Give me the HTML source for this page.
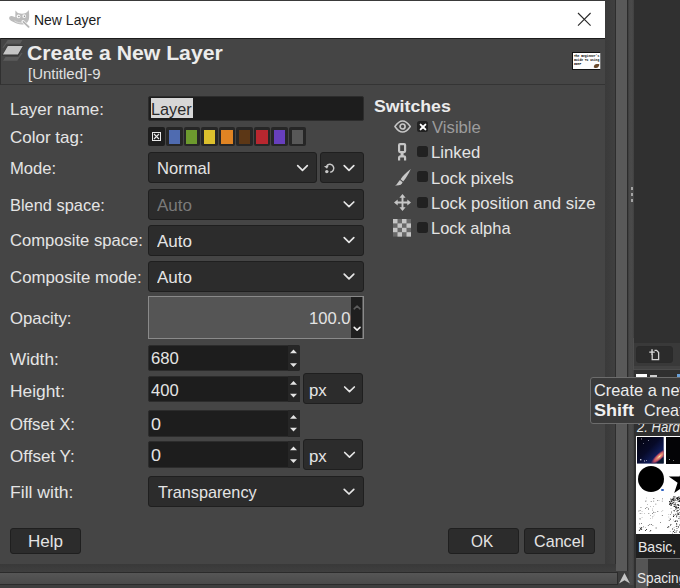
<!DOCTYPE html>
<html><head><meta charset="utf-8"><title>New Layer</title>
<style>
*{box-sizing:border-box;margin:0;padding:0}
html,body{width:680px;height:588px;overflow:hidden;background:#3c3c3c}
body{position:relative;font-family:"Liberation Sans",sans-serif;color:#e6e6e6;font-size:17px}
.a{position:absolute}
.t{position:absolute;white-space:pre;line-height:1;transform-origin:0 0}
.entry{position:absolute;background:#1d1d1d;border:1px solid #2c2c2c;border-radius:2px}
.spin{position:absolute;background:#262626;width:12px}
.combo,.btn{position:absolute;background:#2c2c2c;border:1px solid #1f1f1f;border-radius:3px}
.chk{position:absolute;width:11px;height:11px;background:#212121;border-radius:2.5px;left:417px}
.tag{position:absolute;top:127.3px;width:16.6px;height:19px;background:#262626;border-radius:2px}
.tag i{position:absolute;left:2.7px;top:2.5px;width:11.3px;height:14px;display:block}
svg{position:absolute;overflow:visible}
</style></head><body>

<!-- ===== main window behind ===== -->
<div class="a" style="left:0;top:0;width:680px;height:588px;background:#3c3c3c"></div>
<!-- shadow strip right of dialog -->
<div class="a" style="left:605px;top:0;width:11px;height:572px;background:linear-gradient(90deg,#3a3a3a,#404040)"></div>
<!-- vertical scrollbar -->
<div class="a" style="left:615px;top:0;width:13px;height:571px;background:#595959;border-left:1px solid #2e2e2e;border-right:1px solid #2b2b2b"></div>
<!-- paned handle -->
<div class="a" style="left:628px;top:0;width:6px;height:588px;background:linear-gradient(90deg,#3a3a3a 0,#484848 1.2px,#4a4a4a 4px,#404040 6px)"></div>
<div class="a" style="left:631px;top:187px;width:2px;height:3px;background:#a4a4a4"></div>
<div class="a" style="left:631px;top:193px;width:2px;height:3px;background:#a4a4a4"></div>
<div class="a" style="left:631px;top:199px;width:2px;height:3px;background:#a4a4a4"></div>
<!-- right dock -->
<div class="a" style="left:633.7px;top:0;width:46.3px;height:588px;background:#303030"></div>
<div class="a" style="left:634px;top:343px;width:46px;height:23px;background:#393939"></div>
<div class="a" style="left:634px;top:366px;width:46px;height:4px;background:#424242;border-bottom:1px solid #4c4c4c"></div>
<div class="a" style="left:633px;top:338px;width:1.2px;height:32px;background:#4e4e4e"></div>
<div class="btn" style="left:636.2px;top:345.5px;width:37px;height:17.6px;border-color:#2a2a2a;background:#2b2b2b"></div>
<svg style="left:648.8px;top:348.8px" width="11" height="12" viewBox="0 0 12 13"><path d="M3.500 5.500V11.500H10.500V3.800L8.300 1.500H6" fill="none" stroke="#d4d4d4" stroke-width="1.400"/><path d="M3.300 .3V6.300M.3 3.300H6.300" stroke="#dcdcdc" stroke-width="1.500"/></svg>
<!-- tabs peeking -->
<div class="a" style="left:636px;top:374px;width:11px;height:4px;background:#fff"></div>
<div class="a" style="left:650px;top:375px;width:7px;height:2px;background:#cfcfcf"></div>
<div class="a" style="left:677px;top:374px;width:3px;height:3px;background:#6aa0d8"></div>
<!-- brush grid -->
<div class="a" style="left:636px;top:436px;width:44px;height:98px;background:#fff"></div>
<svg style="left:637.4px;top:437.2px" width="26.7" height="26.6" viewBox="0 0 26.7 26.6">
<defs><linearGradient id="gx" x1="0" y1="0" x2="1" y2="1"><stop offset="0" stop-color="#04040e"/><stop offset=".45" stop-color="#070a28"/><stop offset=".7" stop-color="#101c58"/><stop offset="1" stop-color="#0a1030"/></linearGradient>
<radialGradient id="gp"><stop offset="0" stop-color="#f8e8b0"/><stop offset=".25" stop-color="#e89070"/><stop offset=".6" stop-color="#b84a62"/><stop offset="1" stop-color="#5a2a70" stop-opacity="0"/></radialGradient>
<clipPath id="gc"><rect width="26.7" height="26.6"/></clipPath></defs>
<rect width="26.7" height="26.6" fill="url(#gx)"/>
<g clip-path="url(#gc)"><ellipse cx="22.5" cy="19.5" rx="12" ry="3.6" fill="url(#gp)" transform="rotate(-42 22.5 19.5)"/>
<path d="M20 26.6L26.7 20V26.6z" fill="#0a1a30"/></g>
<g fill="#c8c8d8"><rect x="3" y="22" width="1.4" height="1.4"/><rect x="7" y="23.5" width="1" height="1"/><rect x="4" y="1.5" width=".9" height=".9"/><rect x="11" y="3" width=".8" height=".8"/><rect x="9" y="23" width=".8" height=".8"/><rect x="6" y="6" width=".7" height=".7"/></g>
</svg>
<div class="a" style="left:666px;top:437.2px;width:14px;height:26.6px;background:#040406"></div>
<div class="a" style="left:669px;top:459px;width:1.2px;height:1.2px;background:#999"></div>
<div class="a" style="left:673px;top:460px;width:1px;height:1px;background:#777"></div>
<div class="a" style="left:637.8px;top:465.9px;width:26.2px;height:26.2px;border-radius:50%;background:#000"></div>
<div class="a" style="left:660.5px;top:489px;width:3px;height:2.2px;background:#2a5fc0;border-radius:1px"></div>
<svg style="left:666px;top:465.5px" width="14" height="30" viewBox="0 0 14 30"><polygon points="17,0 13.6,10.4 2.7,10.4 11.6,16.8 8.2,27.1 17,20.7" fill="#000"/></svg>
<svg style="left:636px;top:494px" width="44" height="40" viewBox="0 0 44 40">
<path d="M10.1 6.8h0.5v0.5h-0.5zM3.8 19.1h0.7v0.7h-0.7zM16.6 31.1h0.6v0.6h-0.6zM2.9 15.9h0.5v0.5h-0.5zM8.0 19.6h0.5v0.5h-0.5zM22.7 6.0h0.6v0.6h-0.6zM17.8 20.7h0.5v0.5h-0.5zM16.4 14.7h0.6v0.6h-0.6zM3.2 29.5h0.7v0.7h-0.7zM12.5 19.3h0.7v0.7h-0.7zM16.0 23.8h0.5v0.5h-0.5zM16.5 22.4h0.7v0.7h-0.7zM4.4 24.8h0.5v0.5h-0.5zM17.5 17.9h0.8v0.8h-0.8zM21.4 16.9h0.8v0.8h-0.8zM11.0 9.9h0.6v0.6h-0.6zM19.5 9.8h0.7v0.7h-0.7zM15.1 30.0h0.8v0.8h-0.8zM9.2 33.4h0.5v0.5h-0.5zM14.8 7.3h0.7v0.7h-0.7zM5.8 17.6h0.5v0.5h-0.5zM26.1 4.5h0.7v0.7h-0.7zM10.5 13.2h0.8v0.8h-0.8zM16.5 16.6h0.5v0.5h-0.5zM25.6 17.2h0.5v0.5h-0.5zM3.5 24.4h0.8v0.8h-0.8zM9.1 14.3h0.7v0.7h-0.7zM2.6 16.8h0.6v0.6h-0.6zM17.3 17.8h0.6v0.6h-0.6zM21.2 6.1h0.6v0.6h-0.6zM11.9 31.3h0.8v0.8h-0.8zM4.0 16.4h0.7v0.7h-0.7zM24.1 28.2h0.7v0.7h-0.7zM19.7 33.6h0.8v0.8h-0.8zM25.9 6.8h0.6v0.6h-0.6zM5.8 23.1h0.5v0.5h-0.5zM14.1 20.9h0.7v0.7h-0.7zM9.0 6.7h0.7v0.7h-0.7zM17.2 12.2h0.6v0.6h-0.6zM19.3 18.5h0.5v0.5h-0.5zM13.4 29.9h0.8v0.8h-0.8zM12.0 14.6h0.8v0.8h-0.8zM17.9 4.0h0.5v0.5h-0.5zM26.6 16.1h0.5v0.5h-0.5zM10.5 3.7h0.5v0.5h-0.5zM16.2 19.2h0.7v0.7h-0.7zM17.3 4.3h0.6v0.6h-0.6zM17.4 6.8h0.7v0.7h-0.7zM25.9 21.3h0.8v0.8h-0.8zM5.1 29.2h0.8v0.8h-0.8zM14.0 12.0h0.6v0.6h-0.6zM4.6 13.0h0.7v0.7h-0.7zM14.0 24.1h0.5v0.5h-0.5zM7.1 32.5h0.7v0.7h-0.7zM5.7 19.4h0.5v0.5h-0.5z" fill="#2a2a2a"/>
<path d="M3 37l3-4M4 33.500l2 2.500M9 37l2-2M14 37.500l1-1.500" stroke="#111" stroke-width=".8"/>
<path d="M40.2 4.3h0.6v0.6h-0.6zM37.5 2.5h1v1h-1zM33.4 7.4h0.8v0.8h-0.8zM35.4 7.3h1v1h-1zM37.8 6.0h0.8v0.8h-0.8zM41.3 5.4h1.2v1.2h-1.2zM39.6 3.6h1v1h-1zM39.1 2.4h0.6v0.6h-0.6zM41.1 4.7h1v1h-1zM34.7 9.4h1v1h-1zM33.8 8.9h1v1h-1zM40.9 10.3h0.6v0.6h-0.6zM36.9 8.3h1v1h-1zM42.3 2.6h1.2v1.2h-1.2zM41.3 3.0h0.8v0.8h-0.8zM33.4 8.7h1v1h-1zM34.7 9.0h0.8v0.8h-0.8zM42.3 11.2h0.8v0.8h-0.8zM43.9 8.5h0.8v0.8h-0.8zM36.5 5.8h1.2v1.2h-1.2zM37.6 5.2h0.8v0.8h-0.8zM33.1 7.1h0.8v0.8h-0.8zM42.2 4.7h0.8v0.8h-0.8zM39.6 13.6h1.2v1.2h-1.2zM44.0 2.8h1.2v1.2h-1.2zM36.6 3.8h1.2v1.2h-1.2zM42.8 3.9h0.8v0.8h-0.8zM35.2 7.4h0.6v0.6h-0.6zM41.6 10.3h1.2v1.2h-1.2zM35.7 4.9h1.2v1.2h-1.2zM41.2 3.6h0.6v0.6h-0.6zM40.8 3.6h1.2v1.2h-1.2zM34.7 6.3h1.2v1.2h-1.2zM39.1 9.4h0.8v0.8h-0.8zM38.7 5.4h1.2v1.2h-1.2zM34.0 7.8h0.8v0.8h-0.8zM37.5 2.1h1v1h-1zM42.5 7.0h0.8v0.8h-0.8zM43.2 4.1h1.2v1.2h-1.2zM37.6 12.3h0.8v0.8h-0.8zM34.8 9.9h0.6v0.6h-0.6zM43.2 5.8h1.2v1.2h-1.2zM41.3 13.3h1.2v1.2h-1.2zM42.6 11.3h0.8v0.8h-0.8zM42.0 10.5h1v1h-1zM34.5 10.3h1v1h-1zM37.7 11.8h1.2v1.2h-1.2zM35.2 9.4h0.6v0.6h-0.6zM36.9 10.1h0.6v0.6h-0.6zM39.2 13.0h1v1h-1zM34.5 10.8h1.2v1.2h-1.2zM38.2 3.7h0.8v0.8h-0.8zM34.9 10.0h0.6v0.6h-0.6zM39.3 12.7h1v1h-1zM39.8 36.6h0.8v0.8h-0.8zM42.8 22.1h0.6v0.6h-0.6zM38.7 9.4h0.8v0.8h-0.8zM40.8 21.2h0.6v0.6h-0.6zM40.2 21.5h0.6v0.6h-0.6zM42.0 32.5h1v1h-1zM39.1 26.6h1v1h-1zM43.8 10.7h0.6v0.6h-0.6zM39.3 15.3h0.6v0.6h-0.6zM36.6 5.0h0.6v0.6h-0.6zM42.3 3.5h0.8v0.8h-0.8zM38.6 26.9h1v1h-1zM40.6 34.3h0.8v0.8h-0.8zM34.4 4.6h0.6v0.6h-0.6zM36.0 8.7h1v1h-1zM40.1 11.8h0.8v0.8h-0.8zM40.6 15.1h0.5v0.5h-0.5zM42.8 20.1h0.6v0.6h-0.6zM40.1 6.3h0.5v0.5h-0.5zM37.0 25.7h0.5v0.5h-0.5zM42.3 24.1h0.6v0.6h-0.6zM36.1 34.6h1v1h-1zM34.0 30.5h1v1h-1zM39.2 8.0h0.5v0.5h-0.5zM31.8 32.8h0.6v0.6h-0.6zM41.1 25.9h0.5v0.5h-0.5zM40.7 16.6h1v1h-1zM34.1 25.5h0.6v0.6h-0.6zM37.7 20.6h0.5v0.5h-0.5zM38.3 36.6h0.5v0.5h-0.5zM40.5 26.7h0.5v0.5h-0.5zM39.9 32.1h0.8v0.8h-0.8zM34.9 11.5h0.6v0.6h-0.6zM40.8 19.6h1v1h-1zM40.7 26.1h0.5v0.5h-0.5zM33.8 24.6h0.8v0.8h-0.8zM39.8 14.0h0.6v0.6h-0.6zM41.1 27.3h0.8v0.8h-0.8zM39.1 19.8h0.5v0.5h-0.5zM36.4 38.8h0.6v0.6h-0.6zM39.3 20.0h0.8v0.8h-0.8zM41.8 19.5h1v1h-1zM39.8 5.7h0.5v0.5h-0.5zM43.4 37.3h0.6v0.6h-0.6zM35.4 17.2h0.6v0.6h-0.6zM40.1 29.2h1v1h-1zM37.8 33.2h0.5v0.5h-0.5zM43.3 14.7h0.8v0.8h-0.8zM41.2 36.4h0.5v0.5h-0.5zM38.1 35.5h0.8v0.8h-0.8zM40.0 17.0h0.5v0.5h-0.5zM41.6 16.0h1v1h-1zM40.3 13.1h0.5v0.5h-0.5zM31.2 33.0h0.8v0.8h-0.8zM38.3 38.0h1v1h-1zM38.1 21.4h0.6v0.6h-0.6zM41.1 18.4h0.5v0.5h-0.5zM32.2 32.2h1v1h-1zM34.5 4.8h1v1h-1zM32.8 26.2h0.8v0.8h-0.8zM42.3 20.5h0.6v0.6h-0.6zM42.2 13.1h0.8v0.8h-0.8zM37.2 20.4h1v1h-1zM41.8 7.3h0.6v0.6h-0.6zM42.4 19.3h0.8v0.8h-0.8zM39.9 11.8h0.6v0.6h-0.6zM38.9 11.6h0.8v0.8h-0.8zM41.6 32.1h0.6v0.6h-0.6zM35.1 29.9h0.6v0.6h-0.6zM37.1 5.2h0.8v0.8h-0.8zM42.9 23.7h0.8v0.8h-0.8zM43.7 25.7h0.6v0.6h-0.6zM43.8 6.3h0.6v0.6h-0.6zM35.1 18.5h0.8v0.8h-0.8zM43.3 30.5h1v1h-1zM43.4 37.9h1v1h-1zM40.0 38.0h0.6v0.6h-0.6zM40.7 8.5h0.5v0.5h-0.5zM36.9 36.9h1v1h-1zM44.0 11.4h0.5v0.5h-0.5zM37.7 7.6h0.8v0.8h-0.8zM37.0 22.0h1v1h-1zM39.3 5.5h0.6v0.6h-0.6zM37.9 17.0h0.6v0.6h-0.6zM40.1 22.3h1v1h-1zM39.8 13.0h0.8v0.8h-0.8zM34.3 20.1h0.6v0.6h-0.6zM32.6 22.7h0.5v0.5h-0.5zM38.3 10.0h1v1h-1zM42.8 18.3h0.8v0.8h-0.8zM41.6 11.2h0.5v0.5h-0.5zM37.6 16.0h1v1h-1zM33.2 10.1h0.8v0.8h-0.8zM39.6 10.4h0.6v0.6h-0.6zM34.7 14.2h0.6v0.6h-0.6zM40.4 30.4h0.8v0.8h-0.8zM43.2 6.9h1v1h-1zM32.6 20.5h0.5v0.5h-0.5zM33.9 37.2h0.6v0.6h-0.6z" fill="#1a1a1a"/>
</svg>
<!-- Basic label -->
<div class="a" style="left:636px;top:534px;width:44px;height:24px;background:#1f1f1f"></div>
<!-- spacing -->
<div class="a" style="left:636px;top:558px;width:44px;height:30px;background:#2f2f2f;border-top:1px solid #6a6a6a;border-left:1px solid #555"></div>
<div class="a" style="left:637px;top:559px;width:11px;height:29px;background:#555"></div>
<div class="t" style="left:637.20px;top:420.00px;font-size:14.5px;color:#e8e8e8;transform:scaleX(0.9000);font-style:italic">2. Hard</div>
<div class="t" style="left:637.93px;top:540.00px;font-size:14.5px;color:#e8e8e8;transform:scaleX(0.9691)">Basic,</div>
<div class="t" style="left:637.10px;top:571.00px;font-size:14.5px;color:#e8e8e8;transform:scaleX(0.9400)">Spacing</div>
<!-- horizontal scrollbar -->
<div class="a" style="left:0;top:564px;width:616px;height:8px;background:linear-gradient(180deg,#393939,#3f3f3f)"></div>
<div class="a" style="left:0;top:572px;width:618px;height:13px;background:linear-gradient(180deg,#565656,#4a4a4a);border-top:1px solid #2b2b2b;border-bottom:1px solid #2b2b2b;border-right:1px solid #2b2b2b"></div>
<div class="a" style="left:0;top:585px;width:634px;height:3px;background:#3e3e3e"></div>
<svg style="left:618.5px;top:573px" width="11" height="11" viewBox="0 0 11 11"><polygon points="5.5,0 11,10.5 5.5,7.2 0,10.5" fill="#c4c4c4"/></svg>

<!-- ===== dialog ===== -->
<div class="a" style="left:0;top:0;width:605px;height:564px;background:#454545"></div>
<div class="a" style="left:0;top:0;width:605px;height:38px;background:#fff;border-top:1px solid #3a3a3a"></div>
<svg style="left:578.2px;top:12.7px" width="12.6" height="12.6" viewBox="0 0 13 13"><path d="M0 0L13 13M13 0L0 13" stroke="#2a2a2a" stroke-width="1.15" fill="none"/></svg>
<!-- wilber -->
<svg style="left:0;top:0" width="40" height="36" viewBox="0 0 40 36">
<path d="M9.100 18C9.300 16 11 15.500 12.700 16.300L15.300 17.300 15.400 10.400C16.500 11.500 17.500 12.800 19 13.300 21 13.900 23.500 13.800 25 13.200 26.500 12.500 27.800 11.200 28.700 9.900 29.300 13 29.400 17 28.800 19.500 28.300 21.800 26.500 23.600 24 24.200 20.500 25 16.500 23.800 13.500 22 11.800 21 9.200 20.500 9.100 18Z" fill="#bcbcbc"/>
<path d="M14.500 20.800C17 22.600 20 23.200 22.800 22.600" fill="none" stroke="#e4e4e4" stroke-width=".8"/>
<path d="M23 21.500L28.800 27" stroke="#fafafa" stroke-width="3" stroke-linecap="round"/>
<path d="M23.400 21.900L28.600 26.800" stroke="#b4b4b4" stroke-width="1.700" stroke-linecap="round"/>
<circle cx="18.500" cy="16.400" r="1.900" fill="#f6f6f6"/><circle cx="24.200" cy="16.100" r="1.900" fill="#f6f6f6"/>
<circle cx="18.900" cy="16.500" r=".7" fill="#8a8a8a"/><circle cx="24.500" cy="16.200" r=".7" fill="#8a8a8a"/>
</svg>
<!-- header -->
<div class="a" style="left:0;top:37.8px;width:605px;height:1.2px;background:#1c1c1c"></div>
<div class="a" style="left:0;top:38px;width:605px;height:46.5px;border-left:1.5px solid #303030;border-bottom:1px solid #343434"></div>
<svg style="left:0;top:0" width="30" height="64" viewBox="0 0 30 64">
<polygon points="7.700,40.100 22.400,40.100 20.200,43.700 6.600,43.700 3.600,47.800 2.400,47.800" fill="#5b5b5b"/>
<polygon points="22.600,53 17.300,60.700 3,60.700 5.500,57 18.300,57 21,53" fill="#5b5b5b"/>
<polygon points="7.500,45.400 23.600,45.400 18.200,55.400 2,55.400" fill="#303030"/>
<polygon points="7.800,46.100 22.800,46.100 17.900,54.600 2.900,54.600" fill="#c6c6c6"/>
</svg>
<!-- thumbnail -->
<div class="a" style="left:572px;top:52px;width:29px;height:18px;background:#fdfdfd;border:1px solid #111;border-right-color:#777;overflow:hidden">
<div class="t" style="left:1px;top:1.8px;font-family:'Liberation Mono',monospace;font-size:3px;font-weight:bold;color:#000;line-height:4.35px;white-space:pre">The Beginner's
Guide To Using
GIMP</div>
<div class="a" style="left:20.5px;top:10.5px;width:5px;height:3.5px;background:#6b4a2c;border-radius:2px 1px 2px 2px;transform:skewX(-20deg)"></div>
</div>

<!-- layer name entry -->
<div class="entry" style="left:148px;top:95.5px;width:215.5px;height:25.5px"></div>
<div class="a" style="left:151px;top:98.4px;width:41.6px;height:20px;background:#d7d7d7"></div>

<!-- colour tags -->
<div class="a" style="left:148px;top:127px;width:17px;height:19px;background:#1d1d1d;border-radius:2px"></div>
<svg style="left:152px;top:132px" width="9" height="9" viewBox="0 0 9 9"><rect x=".5" y=".5" width="8" height="8" fill="none" stroke="#e8e8e8" stroke-width="1"/><path d="M2 2L7 7M7 2L2 7" stroke="#e8e8e8" stroke-width="1.100"/></svg>
<div class="tag" style="left:166px"><i style="background:#4f6bb0"></i></div>
<div class="tag" style="left:183.5px"><i style="background:#6d9a2e"></i></div>
<div class="tag" style="left:201px"><i style="background:#dcc02d"></i></div>
<div class="tag" style="left:218.6px"><i style="background:#e08423"></i></div>
<div class="tag" style="left:236.2px"><i style="background:#5c3716"></i></div>
<div class="tag" style="left:253.8px"><i style="background:#b8272f"></i></div>
<div class="tag" style="left:271.4px"><i style="background:#673fbd"></i></div>
<div class="tag" style="left:289px"><i style="background:#585858"></i></div>

<!-- combos -->
<div class="combo" style="left:148px;top:152.2px;width:168.5px;height:31.2px"></div>
<div class="combo" style="left:320px;top:152.2px;width:43.5px;height:31.2px"></div>
<div class="combo" style="left:148px;top:189px;width:215.5px;height:31px"></div>
<div class="combo" style="left:148px;top:224.5px;width:215.5px;height:31px"></div>
<div class="combo" style="left:148px;top:261px;width:215.5px;height:31px"></div>
<div class="combo" style="left:303.2px;top:373.2px;width:60.3px;height:31.2px"></div>
<div class="combo" style="left:303.2px;top:438.8px;width:60.3px;height:31.2px"></div>
<div class="combo" style="left:148px;top:476px;width:215.5px;height:31px"></div>
<!-- chevrons -->
<svg width="680" height="588" style="left:0;top:0" fill="none" stroke="#e6e6e6" stroke-width="1.700" stroke-linecap="round" stroke-linejoin="round">
<path d="M297.7 165.7l4.8 4.6 4.8-4.6"/>
<path d="M344.2 165.7l4.8 4.6 4.8-4.6"/>
<path d="M344.2 202.0l4.8 4.6 4.8-4.6"/>
<path d="M344.2 237.7l4.8 4.6 4.8-4.6"/>
<path d="M344.2 274.2l4.8 4.6 4.8-4.6"/>
<path d="M344.7 387.0l4.8 4.6 4.8-4.6"/>
<path d="M344.7 452.5l4.8 4.6 4.8-4.6"/>
<path d="M344.2 489.4l4.8 4.6 4.8-4.6"/>
</svg>
<!-- reset icon in small combo -->
<svg style="left:324.2px;top:162.5px" width="11" height="11" viewBox="0 0 11 11"><path d="M2.6 2.9A4 4 0 1 1 6.2 9.3" fill="none" stroke="#c8c8c8" stroke-width="1.5"/><path d="M0 3.3L4.8 2.6 3 5.8z" fill="#c8c8c8"/><circle cx="2.8" cy="8.6" r="1.7" fill="#c8c8c8"/></svg>

<!-- opacity -->
<div class="a" style="left:148px;top:296.2px;width:215.5px;height:43px;background:#555;border:1px solid #8a8a8a"></div>
<div class="a" style="left:351.3px;top:297.2px;width:11.2px;height:41px;background:#1f1f1f"></div>
<svg width="680" height="588" style="left:0;top:0" fill="none" stroke-width="1.600" stroke-linecap="round" stroke-linejoin="round">
<path d="M354.200 308.800l2.900-2.800 2.900 2.800" stroke="#5c5c5c"/>
<path d="M354.200 327.400l2.900 2.800 2.900-2.800" stroke="#f0f0f0"/>
</svg>

<!-- spin entries -->
<div class="entry" style="left:148px;top:345.3px;width:152px;height:25.7px"></div>
<div class="entry" style="left:148px;top:375.8px;width:152px;height:26.6px"></div>
<div class="entry" style="left:148px;top:410px;width:152px;height:26.5px"></div>
<div class="entry" style="left:148px;top:441.3px;width:152px;height:26.5px"></div>
<div class="spin" style="left:288px;top:345.3px;height:25.7px;border-radius:0 2px 2px 0"></div>
<div class="spin" style="left:288px;top:375.8px;height:26.6px"></div>
<div class="spin" style="left:288px;top:410px;height:26.5px"></div>
<div class="spin" style="left:288px;top:441.3px;height:26.5px"></div>
<svg width="680" height="588" style="left:0;top:0" fill="#e4e4e4">
<path d="M290 353.200l3.500-3.800 3.500 3.800z"/><path d="M290 363.200l3.500 3.800 3.500-3.800z"/>
<path d="M290 384.800l3.500-3.800 3.500 3.800z"/><path d="M290 393.800l3.500 3.800 3.500-3.800z"/>
<path d="M290 418.800l3.500-3.800 3.500 3.800z"/><path d="M290 427.800l3.500 3.800 3.500-3.800z"/>
<path d="M290 450.200l3.500-3.800 3.500 3.800z"/><path d="M290 459.200l3.500 3.800 3.500-3.800z"/>
</svg>

<!-- switches -->
<div class="chk" style="top:121.3px"></div>
<svg style="left:419.5px;top:123.8px" width="6" height="6" viewBox="0 0 6 6"><path d="M.6 .6L5.400 5.400M5.400 .6L.6 5.400" stroke="#fff" stroke-width="1.900" stroke-linecap="round"/></svg>
<div class="chk" style="top:146.3px"></div>
<div class="chk" style="top:171.3px"></div>
<div class="chk" style="top:196.5px"></div>
<div class="chk" style="top:221.8px"></div>
<!-- eye -->
<svg style="left:393.6px;top:120.1px" width="17.2" height="13" viewBox="0 0 17.2 13"><path d="M.9 6.500C3.600 2.600 6 .9 8.600 .9s5 1.700 7.700 5.600C13.600 10.400 11.200 12.100 8.600 12.100S3.600 10.400.9 6.500z" fill="none" stroke="#c6c6c6" stroke-width="1.500" stroke-linejoin="round"/><circle cx="8.600" cy="6.500" r="2.500" fill="none" stroke="#c6c6c6" stroke-width="1.700"/></svg>
<!-- chain -->
<svg style="left:398px;top:142.8px" width="8.200" height="17.400" viewBox="0 0 8.200 17.400"><rect x="1.100" y="1.100" width="6" height="8" rx="1" fill="none" stroke="#c6c6c6" stroke-width="2.200"/><path d="M4.100 9.500v4" stroke="#c6c6c6" stroke-width="3"/><path d="M1.100 17.400v-2.600a1.400 1.400 0 0 1 1.400-1.400h3.200a1.400 1.400 0 0 1 1.400 1.400v2.600" fill="none" stroke="#c6c6c6" stroke-width="2.200"/></svg>
<!-- brush -->
<svg style="left:394.9px;top:168.9px" width="15.800" height="17.100" viewBox="0 0 15.800 17.100"><path d="M15.800 0C11.500 3 8 6.800 5.600 10.200l2.600 2.200C11 9 14 4.500 15.800 0z" fill="#c8c8c8"/><path d="M4.900 10.900l2.700 2.300c-.3 2.200-3.300 3.700-7.600 3.300 2.200-.9 2.700-3.400 4.900-5.600z" fill="#c8c8c8"/></svg>
<!-- move -->
<svg style="left:393.600px;top:194px" width="17" height="17" viewBox="0 0 17 17"><path d="M8.500 2.500v12M2.500 8.500h12" stroke="#c6c6c6" stroke-width="1.900"/><path d="M8.500 0l3.100 3.700h-6.200zM8.500 17l3.100-3.700h-6.200zM0 8.500l3.700-3.100v6.200zM17 8.500l-3.700-3.100v6.200z" fill="#c6c6c6"/></svg>
<!-- checker -->
<svg style="left:393.300px;top:218.900px" width="18" height="17.600" viewBox="0 0 4 4" preserveAspectRatio="none"><rect width="4" height="4" fill="#686868"/><g fill="#c4c4c4"><rect x="0" y="0" width="1" height="1"/><rect x="2" y="0" width="1" height="1"/><rect x="1" y="1" width="1" height="1"/><rect x="3" y="1" width="1" height="1"/><rect x="0" y="2" width="1" height="1"/><rect x="2" y="2" width="1" height="1"/><rect x="1" y="3" width="1" height="1"/><rect x="3" y="3" width="1" height="1"/></g></svg>

<!-- buttons -->
<div class="btn" style="left:10.3px;top:528px;width:71px;height:26px"></div>
<div class="btn" style="left:447.5px;top:528px;width:71.3px;height:26px"></div>
<div class="btn" style="left:524.2px;top:528px;width:70.8px;height:26px"></div>

<div class="t" style="left:33.67px;top:12.00px;font-size:15px;color:#1b1b1b;transform:scaleX(0.9321)">New Layer</div>
<div class="t" style="left:27.00px;top:43.00px;font-size:20.5px;color:#ececec;transform:scaleX(1.0350);font-weight:bold">Create a New Layer</div>
<div class="t" style="left:27.97px;top:67.00px;font-size:14.5px;color:#e0e0e0;transform:scaleX(1.0340)">[Untitled]-9</div>
<div class="t" style="left:9.81px;top:101.00px;font-size:17px;color:#e4e4e4;transform:scaleX(0.9938)">Layer name:</div>
<div class="t" style="left:9.80px;top:129.00px;font-size:17px;color:#e4e4e4;transform:scaleX(1.0003)">Color tag:</div>
<div class="t" style="left:9.82px;top:160.00px;font-size:17px;color:#e4e4e4;transform:scaleX(0.9775)">Mode:</div>
<div class="t" style="left:9.83px;top:197.00px;font-size:17px;color:#e4e4e4;transform:scaleX(0.9651)">Blend space:</div>
<div class="t" style="left:9.80px;top:232.00px;font-size:17px;color:#e4e4e4;transform:scaleX(0.9760)">Composite space:</div>
<div class="t" style="left:9.80px;top:269.00px;font-size:17px;color:#e4e4e4;transform:scaleX(0.9879)">Composite mode:</div>
<div class="t" style="left:9.80px;top:310.00px;font-size:17px;color:#e4e4e4;transform:scaleX(0.9865)">Opacity:</div>
<div class="t" style="left:10.40px;top:351.00px;font-size:17px;color:#e4e4e4;transform:scaleX(1.0115)">Width:</div>
<div class="t" style="left:9.78px;top:383.00px;font-size:17px;color:#e4e4e4;transform:scaleX(1.0203)">Height:</div>
<div class="t" style="left:9.80px;top:416.00px;font-size:17px;color:#e4e4e4;transform:scaleX(0.9877)">Offset X:</div>
<div class="t" style="left:9.80px;top:448.00px;font-size:17px;color:#e4e4e4;transform:scaleX(1.0021)">Offset Y:</div>
<div class="t" style="left:9.77px;top:484.00px;font-size:17px;color:#e4e4e4;transform:scaleX(1.0340)">Fill with:</div>
<div class="t" style="left:151.04px;top:101.00px;font-size:17px;color:#2a2a2a;transform:scaleX(0.9555)">Layer</div>
<div class="t" style="left:157.02px;top:160.00px;font-size:17px;color:#e4e4e4;transform:scaleX(0.9753)">Normal</div>
<div class="t" style="left:156.80px;top:197.00px;font-size:17px;color:#7a7a7a;transform:scaleX(1.0024)">Auto</div>
<div class="t" style="left:156.80px;top:233.00px;font-size:17px;color:#e4e4e4;transform:scaleX(1.0024)">Auto</div>
<div class="t" style="left:156.80px;top:269.00px;font-size:17px;color:#e4e4e4;transform:scaleX(1.0024)">Auto</div>
<div class="t" style="left:308.82px;top:310.00px;font-size:17px;color:#e4e4e4;transform:scaleX(0.9760)">100.0</div>
<div class="t" style="left:151.00px;top:350.00px;font-size:17px;color:#e4e4e4;transform:scaleX(0.9818)">680</div>
<div class="t" style="left:151.20px;top:382.00px;font-size:17px;color:#e4e4e4;transform:scaleX(0.9746)">400</div>
<div class="t" style="left:151.00px;top:416.00px;font-size:17px;color:#e4e4e4;transform:scaleX(1.0556)">0</div>
<div class="t" style="left:151.00px;top:447.00px;font-size:17px;color:#e4e4e4;transform:scaleX(1.0556)">0</div>
<div class="t" style="left:308.51px;top:382.00px;font-size:17px;color:#e4e4e4;transform:scaleX(0.9911)">px</div>
<div class="t" style="left:308.51px;top:448.00px;font-size:17px;color:#e4e4e4;transform:scaleX(0.9911)">px</div>
<div class="t" style="left:157.50px;top:484.00px;font-size:17px;color:#e4e4e4;transform:scaleX(0.9547)">Transparency</div>
<div class="t" style="left:374.30px;top:98.00px;font-size:17.3px;color:#ececec;transform:scaleX(1.0255);font-weight:bold">Switches</div>
<div class="t" style="left:431.60px;top:119.00px;font-size:17px;color:#9c9c9c;transform:scaleX(0.9814)">Visible</div>
<div class="t" style="left:430.92px;top:144.00px;font-size:17px;color:#e4e4e4;transform:scaleX(0.9848)">Linked</div>
<div class="t" style="left:430.92px;top:170.00px;font-size:17px;color:#e4e4e4;transform:scaleX(0.9807)">Lock pixels</div>
<div class="t" style="left:430.92px;top:195.00px;font-size:17px;color:#e4e4e4;transform:scaleX(0.9836)">Lock position and size</div>
<div class="t" style="left:430.93px;top:220.00px;font-size:17px;color:#e4e4e4;transform:scaleX(0.9673)">Lock alpha</div>
<div class="t" style="left:28.40px;top:533.00px;font-size:17px;color:#e4e4e4;transform:scaleX(1.0027)">Help</div>
<div class="t" style="left:471.00px;top:533.00px;font-size:17px;color:#e4e4e4;transform:scaleX(0.9039)">OK</div>
<div class="t" style="left:534.00px;top:533.00px;font-size:17px;color:#e4e4e4;transform:scaleX(0.9494)">Cancel</div>

<!-- tooltip -->
<div class="a" style="left:590.3px;top:377px;width:95px;height:47px;background:#3a3a3a;border:1px solid #6c6c6c;border-radius:3px"></div>
<div class="t" style="left:593.70px;top:382.00px;font-size:17px;color:#ececec;transform:scaleX(0.9628)">Create a new layer</div>
<div class="t" style="left:593.70px;top:402.00px;font-size:17px;color:#f0f0f0;transform:scaleX(1.0628);font-weight:bold">Shift</div>
<div class="t" style="left:644.40px;top:402.00px;font-size:17px;color:#ececec;transform:scaleX(0.9500)">Create a new layer</div>
</body></html>
